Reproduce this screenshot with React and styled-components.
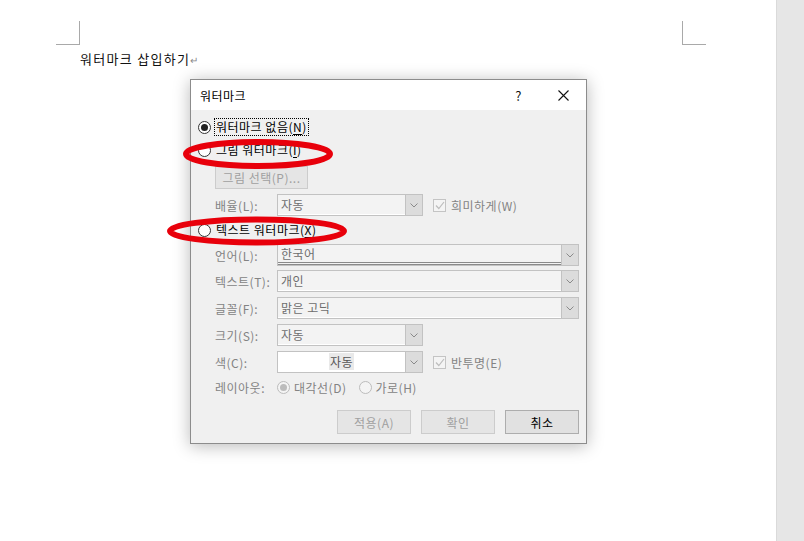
import React from "react";
import styled, { createGlobalStyle } from "styled-components";

const GlobalStyle = createGlobalStyle`
  html, body {
    margin: 0;
    padding: 0;
    background: #ffffff;
  }
  body {
    font-family: "Noto Sans CJK KR", "Noto Sans", sans-serif;
    font-size: 12px;
    color: #000;
  }
`;

const Page = styled.div`
  display: flex;
  width: 804px;
  height: 541px;
  overflow: hidden;
`;

const DocumentArea = styled.div`
  position: relative;
  flex: 1;
  display: flex;
  flex-direction: column;
  padding-top: 21px;
`;

const CornerRow = styled.div`
  display: flex;
  justify-content: space-between;
  padding: 0 70px 0 56px;
`;

const Corner = styled.div`
  width: 23px;
  height: 23px;
  border-bottom: 1px solid #a9a9a9;
  border-left: ${(p) => (p.$side === "right" ? "1px solid #a9a9a9" : "none")};
  border-right: ${(p) => (p.$side === "left" ? "1px solid #a9a9a9" : "none")};
`;

const DocText = styled.div`
  margin-top: 4px;
  padding-left: 80px;
  font-size: 13px;
  line-height: 19px;
  letter-spacing: 1.3px;
  color: #111;
`;

const ParaMark = styled.span`
  font-size: 10px;
  color: #8a8a8a;
  letter-spacing: 0;
`;

const ScrollTrack = styled.div`
  width: 27px;
  background: #e6e6e6;
  border-left: 1px solid #dadada;
`;

/* dialog window */
const Dialog = styled.div`
  position: absolute;
  left: 190px;
  top: 79px;
  width: 395px;
  height: 363px;
  border: 1px solid #8c8c8c;
  background: #f0f0f0;
  box-shadow: 0 2px 16px rgba(0, 0, 0, 0.28);
  display: flex;
  flex-direction: column;
  letter-spacing: 0.5px;
`;

const TitleBar = styled.div`
  height: 30px;
  background: #ffffff;
  display: flex;
  align-items: center;
  padding-left: 9px;
`;

const TitleText = styled.div`
  flex: 1;
  font-size: 12px;
`;

const TitleButton = styled.div`
  width: 45px;
  height: 30px;
  display: flex;
  align-items: center;
  justify-content: center;
  font-size: 13px;
  color: #111;
`;

const Body = styled.div`
  flex: 1;
  display: flex;
  flex-direction: column;
  padding: 6px 7px 10px 7px;
`;

const RadioRow = styled.div`
  display: flex;
  align-items: center;
  height: ${(p) => p.$h || 22}px;
  margin-top: ${(p) => p.$mt || 0}px;
  gap: 3px;
`;

const RadioCircle = styled.span`
  width: 11px;
  height: 11px;
  border-radius: 50%;
  border: 1px solid ${(p) => (p.$disabled ? "#bcbcbc" : "#333333")};
  background: ${(p) => (p.$disabled ? "#f4f4f4" : "#ffffff")};
  display: flex;
  align-items: center;
  justify-content: center;
  flex-shrink: 0;
  &::after {
    content: "";
    display: ${(p) => (p.$checked ? "block" : "none")};
    width: 7px;
    height: 7px;
    border-radius: 50%;
    background: ${(p) => (p.$disabled ? "#bcbcbc" : "#222222")};
  }
`;

const RadioText = styled.span`
  color: ${(p) => (p.$disabled ? "#6d6d6d" : "#000")};
  padding: 0 1px;
  line-height: 16px;
  border: 1px ${(p) => (p.$focus ? "dotted #000" : "solid transparent")};
`;

const Mnemonic = styled.u`
  text-underline-offset: 2px;
`;

const PushButton = styled.div`
  width: ${(p) => p.$w || 74}px;
  height: ${(p) => p.$h || 24}px;
  box-sizing: border-box;
  border: 1px solid ${(p) => (p.$disabled ? "#cccccc" : "#adadad")};
  background: ${(p) => (p.$disabled ? "#e5e5e5" : "#e1e1e1")};
  color: ${(p) => (p.$disabled ? "#a0a0a0" : "#000")};
  display: flex;
  align-items: center;
  justify-content: center;
  margin-left: ${(p) => p.$ml || 0}px;
  margin-top: ${(p) => p.$mt || 0}px;
`;

const FieldRow = styled.div`
  display: flex;
  align-items: center;
  padding-left: 17px;
  margin-top: ${(p) => p.$mt || 0}px;
  height: ${(p) => p.$h || 22}px;
`;

const FieldLabel = styled.span`
  width: 62px;
  flex-shrink: 0;
  color: #838383;
  white-space: nowrap;
`;

const Select = styled.div`
  width: ${(p) => (p.$wide ? 302 : 146)}px;
  height: 22px;
  box-sizing: border-box;
  border: 1px solid #c2c2c2;
  background: ${(p) => (p.$white ? "#ffffff" : "#f3f3f3")};
  display: flex;
`;

const SelectValue = styled.div`
  flex: 1;
  display: flex;
  align-items: center;
  justify-content: ${(p) => (p.$center ? "center" : "flex-start")};
  padding-left: ${(p) => (p.$center ? 0 : 3)}px;
  color: #6d6d6d;
  border-bottom: ${(p) => (p.$double ? "3px double #8a8a8a" : "1px solid #ffffff")};
`;

const Highlight = styled.span`
  background: #e9e9e9;
  padding: 0 1px;
  color: #555;
`;

const DropButton = styled.div`
  width: 16px;
  border-left: 1px solid #c2c2c2;
  background: #dcdcdc;
  display: flex;
  align-items: center;
  justify-content: center;
`;

const CheckItem = styled.div`
  display: flex;
  align-items: center;
  margin-left: 10px;
  gap: 5px;
  color: #838383;
`;

const CheckBox = styled.span`
  width: 11px;
  height: 11px;
  border: 1px solid #c4c4c4;
  background: #f4f4f4;
  display: flex;
  align-items: center;
  justify-content: center;
`;

const LayoutOption = styled.div`
  display: flex;
  align-items: center;
  gap: 4px;
  margin-right: ${(p) => p.$mr || 0}px;
  color: #838383;
`;

const Footer = styled.div`
  display: flex;
  justify-content: flex-end;
  gap: 10px;
  margin-top: 14px;
`;

const Overlay = styled.svg`
  position: absolute;
  left: 0;
  top: 0;
  pointer-events: none;
`;

const Chevron = () => (
  <svg width="8" height="5" viewBox="0 0 8 5">
    <path d="M0.5 0.5 L4 4 L7.5 0.5" fill="none" stroke="#8a8a8a" strokeWidth="1" />
  </svg>
);

const Check = () => (
  <svg width="10" height="9" viewBox="0 0 10 9">
    <path d="M1 4.5 L3.8 7.5 L9 1" fill="none" stroke="#bdbdbd" strokeWidth="1.2" />
  </svg>
);

const CloseIcon = () => (
  <svg width="11" height="11" viewBox="0 0 11 11">
    <path d="M0.5 0.5 L10.5 10.5 M10.5 0.5 L0.5 10.5" stroke="#111" strokeWidth="1.1" />
  </svg>
);

const Combo = ({ value, wide, white, center, double }) => (
  <Select $wide={wide} $white={white}>
    <SelectValue $center={center} $double={double}>
      {center ? <Highlight>{value}</Highlight> : value}
    </SelectValue>
    <DropButton>
      <Chevron />
    </DropButton>
  </Select>
);

const App = () => {
  return (
    <>
      <GlobalStyle />
      <Page>
        <DocumentArea>
          <CornerRow>
            <Corner $side="left" />
            <Corner $side="right" />
          </CornerRow>
          <DocText>
            워터마크 삽입하기<ParaMark>↵</ParaMark>
          </DocText>

          <Dialog>
            <TitleBar>
              <TitleText>워터마크</TitleText>
              <TitleButton>?</TitleButton>
              <TitleButton>
                <CloseIcon />
              </TitleButton>
            </TitleBar>
            <Body>
              <RadioRow>
                <RadioCircle $checked />
                <RadioText $focus>
                  워터마크 없음(<Mnemonic>N</Mnemonic>)
                </RadioText>
              </RadioRow>
              <RadioRow $mt={1}>
                <RadioCircle />
                <RadioText>
                  그림 워터마크(<Mnemonic>I</Mnemonic>)
                </RadioText>
              </RadioRow>
              <PushButton $disabled $w={93} $h={23} $ml={17} $mt={5}>
                그림 선택(P)...
              </PushButton>
              <FieldRow $mt={5}>
                <FieldLabel>배율(L):</FieldLabel>
                <Combo value="자동" />
                <CheckItem>
                  <CheckBox>
                    <Check />
                  </CheckBox>
                  희미하게(W)
                </CheckItem>
              </FieldRow>
              <RadioRow $mt={4} $h={20}>
                <RadioCircle />
                <RadioText>
                  텍스트 워터마크(<Mnemonic>X</Mnemonic>)
                </RadioText>
              </RadioRow>
              <FieldRow $mt={4}>
                <FieldLabel>언어(L):</FieldLabel>
                <Combo value="한국어" wide double />
              </FieldRow>
              <FieldRow $mt={4}>
                <FieldLabel>텍스트(T):</FieldLabel>
                <Combo value="개인" wide />
              </FieldRow>
              <FieldRow $mt={5}>
                <FieldLabel>글꼴(F):</FieldLabel>
                <Combo value="맑은 고딕" wide />
              </FieldRow>
              <FieldRow $mt={5}>
                <FieldLabel>크기(S):</FieldLabel>
                <Combo value="자동" />
              </FieldRow>
              <FieldRow $mt={5}>
                <FieldLabel>색(C):</FieldLabel>
                <Combo value="자동" white center />
                <CheckItem>
                  <CheckBox>
                    <Check />
                  </CheckBox>
                  반투명(E)
                </CheckItem>
              </FieldRow>
              <FieldRow $mt={5} $h={18}>
                <FieldLabel>레이아웃:</FieldLabel>
                <LayoutOption $mr={12}>
                  <RadioCircle $checked $disabled />
                  대각선(D)
                </LayoutOption>
                <LayoutOption>
                  <RadioCircle $disabled />
                  가로(H)
                </LayoutOption>
              </FieldRow>
              <Footer>
                <PushButton $disabled>적용(A)</PushButton>
                <PushButton $disabled>확인</PushButton>
                <PushButton>취소</PushButton>
              </Footer>
            </Body>
          </Dialog>

          <Overlay width="776" height="541" viewBox="0 0 776 541">
            <ellipse cx="258" cy="154" rx="72" ry="12" fill="none" stroke="#e8000b" strokeWidth="6" />
            <ellipse cx="257" cy="231" rx="87" ry="11.5" fill="none" stroke="#e8000b" strokeWidth="6" />
          </Overlay>
        </DocumentArea>
        <ScrollTrack />
      </Page>
    </>
  );
};

export default App;
